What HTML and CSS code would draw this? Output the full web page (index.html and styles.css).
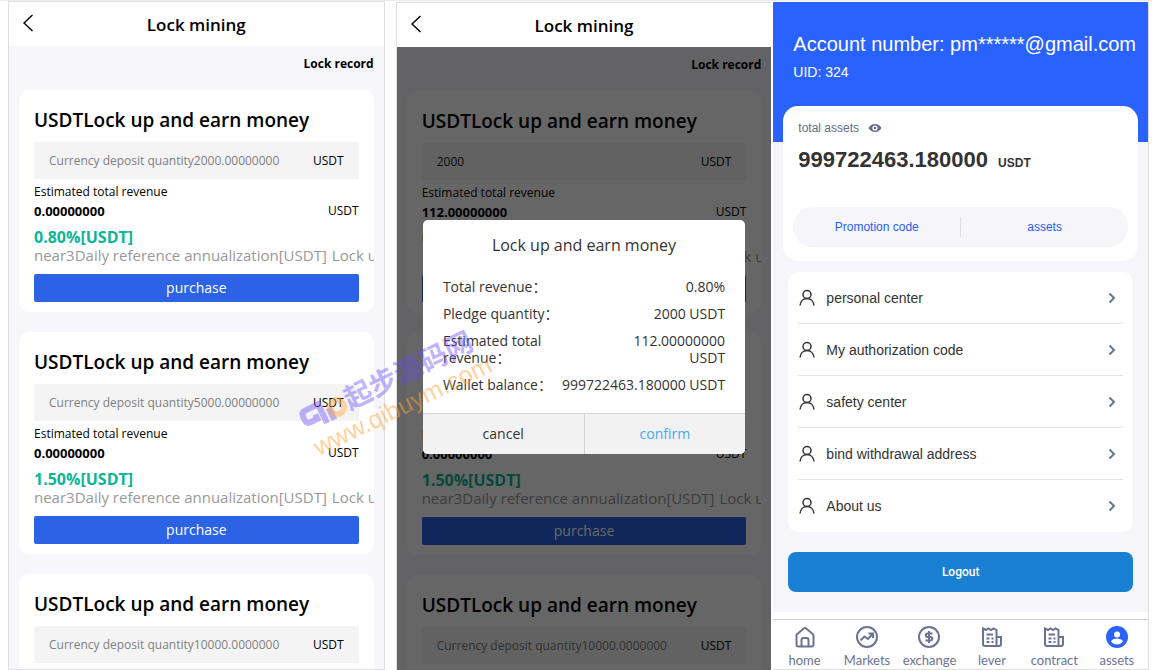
FILE: index.html
```
<!DOCTYPE html>
<html lang="en">
<head>
  <meta charset="utf-8">
  <meta name="viewport" content="width=device-width, initial-scale=1">
  <title>Lock mining</title>
  <link rel="stylesheet" href="styles.css">
</head>
<body>

  <!-- shared icons -->
  <svg class="sprite" aria-hidden="true">
    <symbol id="back" viewBox="0 0 12 20"><path d="M10.500 2L2 10l8.500 8"/></symbol>
    <symbol id="user" viewBox="0 0 18 18"><circle cx="9" cy="5.500" r="4"/><path d="M2 16.500c.4-4 3.200-7 7-7s6.600 3 7 7"/></symbol>
    <symbol id="next" viewBox="0 0 8 12"><path d="M1.500 1.500L6 6l-4.500 4.500"/></symbol>
    <symbol id="bill" viewBox="0 0 22 22"><path d="M2 2.500l3 1.500 2.500-1.500L10 4l2.500-1.500L15.500 4V20H4a2 2 0 0 1-2-2zM15.500 11H20v7a2 2 0 0 1-2 2h-2.500M5.500 8.500H12M5.500 12.500h3M10.500 12.500h2M5.500 16h3M10.500 16h2"/></symbol>
  </svg>

  <main class="page">

    <section class="phone">
      <header class="topbar">
        <button class="back" aria-label="Back"><svg><use href="#back"/></svg></button>
        <h1>Lock mining</h1>
      </header>
      <a class="record" href="#">Lock record</a>

      <article class="card">
        <h2>USDTLock up and earn money</h2>
        <div class="field">
          <input type="text" aria-label="Deposit quantity" placeholder="Currency deposit quantity2000.00000000">
          <span>USDT</span>
        </div>
        <p class="label">Estimated total revenue</p>
        <p class="revenue"><b>0.00000000</b><span>USDT</span></p>
        <p class="rate">0.80%[USDT]</p>
        <p class="note"><span>near3Daily reference annualization[USDT]</span><span>Lock up</span></p>
        <button class="purchase">purchase</button>
      </article>

      <article class="card">
        <h2>USDTLock up and earn money</h2>
        <div class="field">
          <input type="text" aria-label="Deposit quantity" placeholder="Currency deposit quantity5000.00000000">
          <span>USDT</span>
        </div>
        <p class="label">Estimated total revenue</p>
        <p class="revenue"><b>0.00000000</b><span>USDT</span></p>
        <p class="rate">1.50%[USDT]</p>
        <p class="note"><span>near3Daily reference annualization[USDT]</span><span>Lock up</span></p>
        <button class="purchase">purchase</button>
      </article>

      <article class="card">
        <h2>USDTLock up and earn money</h2>
        <div class="field">
          <input type="text" aria-label="Deposit quantity" placeholder="Currency deposit quantity10000.0000000">
          <span>USDT</span>
        </div>
      </article>
    </section>

    <section class="phone dimmed">
      <header class="topbar">
        <button class="back" aria-label="Back"><svg><use href="#back"/></svg></button>
        <h1>Lock mining</h1>
      </header>
      <a class="record" href="#">Lock record</a>

      <article class="card">
        <h2>USDTLock up and earn money</h2>
        <div class="field">
          <input type="text" aria-label="Deposit quantity" value="2000">
          <span>USDT</span>
        </div>
        <p class="label">Estimated total revenue</p>
        <p class="revenue"><b>112.00000000</b><span>USDT</span></p>
        <p class="rate">0.80%[USDT]</p>
        <p class="note"><span>near3Daily reference annualization[USDT]</span><span>Lock up</span></p>
        <button class="purchase">purchase</button>
      </article>

      <article class="card">
        <h2>USDTLock up and earn money</h2>
        <div class="field">
          <input type="text" aria-label="Deposit quantity" placeholder="Currency deposit quantity5000.00000000">
          <span>USDT</span>
        </div>
        <p class="label">Estimated total revenue</p>
        <p class="revenue"><b>0.00000000</b><span>USDT</span></p>
        <p class="rate">1.50%[USDT]</p>
        <p class="note"><span>near3Daily reference annualization[USDT]</span><span>Lock up</span></p>
        <button class="purchase">purchase</button>
      </article>

      <article class="card">
        <h2>USDTLock up and earn money</h2>
        <div class="field">
          <input type="text" aria-label="Deposit quantity" placeholder="Currency deposit quantity10000.0000000">
          <span>USDT</span>
        </div>
      </article>

      <div class="overlay">
        <div class="dialog" role="dialog" aria-labelledby="dialog-title">
          <h2 id="dialog-title">Lock up and earn money</h2>
          <dl>
            <div><dt>Total revenue：</dt><dd>0.80%</dd></div>
            <div><dt>Pledge quantity：</dt><dd>2000 USDT</dd></div>
            <div><dt>Estimated total<br>revenue：</dt><dd>112.00000000<br>USDT</dd></div>
            <div><dt>Wallet balance：</dt><dd>999722463.180000 USDT</dd></div>
          </dl>
          <div class="actions">
            <button>cancel</button>
            <button class="confirm">confirm</button>
          </div>
        </div>
      </div>
    </section>

    <section class="phone account">
      <header class="profile">
        <h1>Account number: pm******@gmail.com</h1>
        <p>UID: 324</p>
      </header>

      <div class="balance">
        <p class="total">total assets
          <svg class="eye" viewBox="0 0 14 10"><path d="M7 1C3.800 1 1.600 3 .6 5c1 2 3.200 4 6.400 4s5.400-2 6.400-4C12.400 3 10.200 1 7 1z"/><circle class="ring" cx="7" cy="5" r="2.600"/><circle cx="7" cy="5" r="1.300"/></svg>
        </p>
        <p class="amount">999722463.180000 <small>USDT</small></p>
        <div class="pill">
          <a href="#">Promotion code</a>
          <a href="#">assets</a>
        </div>
      </div>

      <ul class="menu">
        <li><a href="#"><svg class="user"><use href="#user"/></svg><span>personal center</span><svg class="next"><use href="#next"/></svg></a></li>
        <li><a href="#"><svg class="user"><use href="#user"/></svg><span>My authorization code</span><svg class="next"><use href="#next"/></svg></a></li>
        <li><a href="#"><svg class="user"><use href="#user"/></svg><span>safety center</span><svg class="next"><use href="#next"/></svg></a></li>
        <li><a href="#"><svg class="user"><use href="#user"/></svg><span>bind withdrawal address</span><svg class="next"><use href="#next"/></svg></a></li>
        <li><a href="#"><svg class="user"><use href="#user"/></svg><span>About us</span><svg class="next"><use href="#next"/></svg></a></li>
      </ul>

      <button class="logout">Logout</button>

      <nav class="tabs">
        <a href="#"><svg viewBox="0 0 22 22"><path d="M2.500 9.500a2 2 0 0 1 .8-1.600L9.800 2.500a2 2 0 0 1 2.400 0l6.500 5.400a2 2 0 0 1 .8 1.600v9a2 2 0 0 1-2 2h-13a2 2 0 0 1-2-2zM7.500 20v-6a2 2 0 0 1 2-2h3a2 2 0 0 1 2 2v6"/></svg>home</a>
        <a href="#"><svg viewBox="0 0 22 22"><circle cx="11" cy="11" r="10"/><path d="M4.500 14.500l4-4 3.500 2.500 4.500-5M12.500 7.500H17v4.500"/></svg>Markets</a>
        <a href="#"><svg viewBox="0 0 22 22"><circle cx="11" cy="11" r="10"/><path d="M14.500 7.500h-5a1.750 1.750 0 0 0 0 3.500h3a1.750 1.750 0 0 1 0 3.500h-5M11 5v12"/></svg>exchange</a>
        <a href="#"><svg><use href="#bill"/></svg>lever</a>
        <a href="#"><svg><use href="#bill"/></svg>contract</a>
        <a href="#"><svg class="face" viewBox="0 0 22 22"><circle class="disc" cx="11" cy="11" r="11"/><circle cx="11" cy="8.500" r="3"/><path d="M5 15.500c1-2.300 3.500-3 6-3s5 .7 6 3c-1.500 2-3.500 3-6 3s-4.500-1-6-3z"/></svg>assets</a>
      </nav>
    </section>

    <div class="watermark" aria-hidden="true">
      <p class="brand">
        <svg viewBox="0 0 48 28"><path d="M22 27V6H8q-5 0-5 5v3q0 5 5 5h7v-5M30 27V14"/><circle cx="38" cy="17" r="7"/></svg>起步源码网
      </p>
      <p class="site">www.qibuym.com</p>
    </div>

  </main>

</body>
</html>
```
FILE: styles.css
```
* {
  box-sizing: border-box;
}

body {
  margin: 0;
  font-family: "Open Sans", "Noto Sans CJK SC", sans-serif;
  font-size: 12px;
  color: #000;
  background-color: #fff;
}

h1, h2, p, ul, dl, dd {
  margin: 0;
  padding: 0;
}

a {
  color: inherit;
  text-decoration: none;
}

button {
  border: none;
  padding: 0;
  font-family: inherit;
  cursor: pointer;
}

svg {
  fill: none;
  stroke: currentColor;
  flex: none;
}

.sprite {
  display: none;
}

/* three screens side by side */
.page {
  position: relative;
  display: flex;
  height: 100vh;
  padding: 0 3px 0 8px;
  border-top: 1px solid #ececec;
  overflow: hidden;
}

.phone {
  position: relative;
  flex: 1;
  min-width: 0;
  border: 1px solid #dfdfe2;
  background-color: #f7f6fb;
  overflow: hidden;
}

.phone.dimmed {
  margin: 1px 2px 0 11px;
  border-right: none;
  border-bottom: none;
}

.topbar {
  position: relative;
  z-index: 2;
  display: flex;
  align-items: center;
  justify-content: center;
  height: 44px;
  padding-top: 2px;
  background-color: #fff;
}

.topbar h1 {
  font-size: 17px;
  font-weight: 600;
  line-height: 24px;
}

.back {
  position: absolute;
  left: 13px;
  top: 11px;
  background: none;
}

.back svg {
  display: block;
  width: 12px;
  height: 20px;
  stroke-width: 1.4;
}

.record {
  display: block;
  padding: 9px 10px 17px;
  font-weight: 700;
  font-size: 12px;
  line-height: 18px;
  text-align: right;
}

.card {
  margin: 0 10px 20px;
  padding: 16px 15px 10px;
  border-radius: 10px;
  background-color: #fff;
  overflow: hidden;
}

.card h2 {
  font-size: 19px;
  font-weight: 600;
  line-height: 28px;
  margin-bottom: 8px;
  white-space: nowrap;
}

.field {
  display: flex;
  align-items: center;
  height: 37px;
  padding: 0 15px;
  margin-bottom: 4px;
  background-color: #f4f4f4;
}

.field input {
  flex: 1;
  min-width: 0;
  padding: 0;
  border: none;
  background: none;
  font-family: inherit;
  font-size: 12px;
  color: #222;
}

.field input::placeholder {
  color: #808080;
}

.label {
  line-height: 18px;
}

.revenue {
  display: flex;
  justify-content: space-between;
  line-height: 20px;
  margin-bottom: 6px;
}

.revenue b {
  font-size: 13px;
}

.rate {
  font-size: 16px;
  font-weight: 700;
  line-height: 20px;
  color: #0bb596;
}

.note {
  display: flex;
  gap: 5px;
  font-size: 15px;
  line-height: 16px;
  margin-bottom: 11px;
  color: #999;
  white-space: nowrap;
}

.purchase {
  display: block;
  width: 100%;
  height: 28px;
  padding-bottom: 2px;
  border-radius: 2px;
  background-color: #2c63e5;
  color: #fff;
  font-size: 14px;
}

/* confirm dialog */
.overlay {
  position: absolute;
  inset: 0;
  z-index: 1;
  display: flex;
  align-items: center;
  justify-content: center;
  background-color: rgba(0, 0, 0, 0.6);
}

.dialog {
  width: 86%;
  border-radius: 5px;
  background-color: #fff;
  color: #333;
  overflow: hidden;
}

.dialog h2 {
  padding-top: 13px;
  font-size: 16px;
  font-weight: 400;
  line-height: 24px;
  text-align: center;
}

.dialog dl {
  display: flex;
  flex-direction: column;
  gap: 10px;
  padding: 21px 20px 20px;
  font-size: 14px;
  line-height: 17px;
  white-space: nowrap;
}

.dialog dl div {
  display: flex;
  justify-content: space-between;
}

.dialog dt {
  width: 110px;
}

.dialog dd {
  text-align: right;
}

.actions {
  display: flex;
  border-top: 1px solid #d2d2d2;
}

.actions button {
  flex: 1;
  height: 40px;
  background-color: #f2f2f2;
  color: #333;
  font-size: 14px;
}

.actions .confirm {
  border-left: 1px solid #d2d2d2;
  color: #3fabf5;
}

/* account screen */
.account {
  display: flex;
  flex-direction: column;
  margin-top: 1px;
  border-left: none;
  border-top: none;
  background-color: #f5f5fa;
  font-family: "Liberation Sans", sans-serif;
}

.profile {
  flex: none;
  height: 140px;
  padding: 30px 20px;
  background-color: #2a62ff;
  color: #fff;
}

.profile h1 {
  font-size: 20px;
  font-weight: 400;
  line-height: 24px;
  white-space: nowrap;
}

.profile p {
  margin-top: 6px;
  font-size: 14px;
  line-height: 20px;
}

.balance {
  margin: -36px 10px 11px;
  padding: 14px 10px;
  border-radius: 15px;
  background-color: #fff;
}

.total {
  display: flex;
  align-items: center;
  gap: 9px;
  padding-left: 5px;
  line-height: 16px;
  color: #666b80;
}

.eye {
  width: 14px;
  height: 10px;
  fill: #666b8c;
  stroke: none;
}

.eye .ring {
  fill: #fff;
}

.amount {
  padding: 9px 0 29px 5px;
  font-size: 22px;
  font-weight: 700;
  line-height: 29px;
  color: #333;
}

.amount small {
  margin-left: 4px;
  font-size: 12px;
}

.pill {
  display: flex;
  padding: 10px 0;
  border-radius: 20px;
  background-color: #f5f5fa;
}

.pill a {
  flex: 1;
  line-height: 20px;
  text-align: center;
  color: #2a5ff5;
}

.pill a + a {
  border-left: 1px solid #dcdde5;
}

.menu {
  margin: 0 15px 20px;
  padding: 0 10px;
  border-radius: 10px;
  background-color: #fff;
  list-style: none;
}

.menu li + li {
  border-top: 1px solid #e2e2e2;
}

.menu a {
  display: flex;
  align-items: center;
  height: 51px;
  padding-right: 7px;
  font-size: 14px;
  color: #333;
}

.menu li:last-child a {
  height: 52px;
}

.menu span {
  flex: 1;
  margin-left: 10px;
}

.user {
  width: 18px;
  height: 18px;
  stroke-width: 1.5;
}

.next {
  width: 8px;
  height: 12px;
  stroke-width: 2;
  color: #6b7392;
}

.logout {
  flex: none;
  height: 40px;
  margin: 0 15px 20px;
  border-radius: 8px;
  background-color: #1a80d3;
  color: #fff;
  font-family: Roboto, sans-serif;
  font-size: 12px;
  font-weight: 500;
}

.tabs {
  flex: 1;
  display: flex;
  border-top: 7px solid #fff;
  background-color: #fff;
  box-shadow: inset 0 1px #d0d0d4;
}

.tabs a {
  flex: 1 1 0;
  min-width: 0;
  display: flex;
  flex-direction: column;
  align-items: center;
  padding-top: 7px;
  gap: 3px;
  font-family: Lato, sans-serif;
  font-size: 13px;
  line-height: 18px;
  color: #6b7392;
}

.tabs svg {
  width: 22px;
  height: 22px;
  stroke-width: 2;
}

.tabs .face {
  fill: #fff;
  stroke: none;
}

.face .disc {
  fill: #2a62ff;
}

/* watermark laid over the screens */
.watermark {
  position: absolute;
  left: 298px;
  top: 360px;
  z-index: 3;
  transform: rotate(-26deg);
  pointer-events: none;
  white-space: nowrap;
}

.brand {
  display: flex;
  align-items: center;
  font-size: 28px;
  font-weight: 700;
  line-height: 32px;
  color: rgba(104, 72, 255, 0.42);
}

.brand svg {
  width: 48px;
  height: 28px;
  stroke-width: 6;
}

.brand circle {
  stroke: rgba(255, 170, 60, 0.45);
}

.site {
  font-family: "Liberation Sans", sans-serif;
  font-size: 25px;
  line-height: 28px;
  color: rgba(255, 165, 60, 0.5);
}
```
